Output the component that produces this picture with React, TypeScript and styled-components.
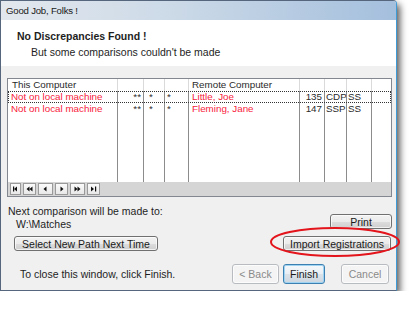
import React from 'react'
import styled, { createGlobalStyle } from 'styled-components'

const GlobalStyle = createGlobalStyle`
  html, body {
    margin: 0;
    padding: 0;
    background: #fff;
  }
  body {
    font-family: 'Liberation Sans', Arial, sans-serif;
    color: #1e1e1e;
  }
  * {
    box-sizing: border-box;
  }
`

const Window = styled.div`
  width: 397px;
  height: 291px;
  border: 1px solid #56667c;
  border-right-color: #3f9bd8;
  border-radius: 0 4px 0 0;
  box-shadow: 3px 4px 7px rgba(0, 0, 0, 0.65);
  background: #f0f0f0;
  display: flex;
  flex-direction: column;
`

const TitleBar = styled.div`
  height: 19px;
  padding-left: 5px;
  display: flex;
  align-items: center;
  font-size: 9.6px;
  letter-spacing: -0.2px;
  color: #1a1a1a;
  background: linear-gradient(to right, #e3e8ee 0%, #cbd9e7 45%, #a4bfdd 100%);
  border-radius: 0 3px 0 0;
`

const Header = styled.div`
  height: 46px;
  background: #fff;
  padding: 10px 0 0 16px;
`

const HeaderTitle = styled.div`
  font-size: 10.5px;
  font-weight: bold;
  line-height: 12px;
`

const HeaderSub = styled.div`
  font-size: 10.5px;
  line-height: 12px;
  margin: 4px 0 0 14px;
`

const Body = styled.div`
  flex: 1;
  padding: 12px 4px 0 6px;
  display: flex;
  flex-direction: column;
`

// ---- grid ----
const cols = '110px 26px 21px 24px 111px 25px 22px 25px 1fr'

const GridBox = styled.div`
  height: 119px;
  border: 1px solid #828790;
  background: #fff;
  display: flex;
  flex-direction: column;
  font-size: 9.8px;
`

const Row = styled.div<{ $h?: number; $focus?: boolean }>`
  display: grid;
  grid-template-columns: ${cols};
  height: ${p => (p.$h ? `${p.$h}px` : 'auto')};
  flex: ${p => (p.$h ? 'none' : 1)};
  outline: ${p => (p.$focus ? '1px dotted #333' : 'none')};
  outline-offset: -1px;
  line-height: 12px;
`

const Cell = styled.div<{ $align?: 'left' | 'right'; $pad?: number; $red?: boolean; $head?: boolean }>`
  border-right: 1px solid ${p => (p.$head ? '#dadada' : '#8c8c8c')};
  text-align: ${p => p.$align || 'left'};
  padding: 0 ${p => (p.$align === 'right' ? 2 : 0)}px 0 ${p => (p.$pad ?? 3)}px;
  color: ${p => (p.$red ? '#f81c3c' : '#2a2a2a')};
  white-space: nowrap;
  overflow: hidden;
  &:last-child {
    border-right: none;
  }
`

const NavBar = styled.div`
  height: 14px;
  background: #d5d5d5;
  display: flex;
  align-items: center;
  gap: 2px;
  padding-left: 2px;
`

const NavBtn = styled.div<{ $w: number }>`
  width: ${p => p.$w}px;
  height: 12px;
  border: 1px solid #9a9a9a;
  background: linear-gradient(#fbfbfb, #e8e8e8);
  display: flex;
  align-items: center;
  justify-content: center;
`

// ---- lower part ----
const Lower = styled.div`
  display: flex;
  justify-content: space-between;
  margin-top: 8px;
`

const LeftCol = styled.div`
  display: flex;
  flex-direction: column;
  align-items: flex-start;
`

const RightCol = styled.div`
  display: flex;
  flex-direction: column;
  align-items: flex-end;
  padding-top: 9px;
  gap: 7px;
`

const Label = styled.div<{ $indent?: number }>`
  font-size: 10.5px;
  line-height: 13px;
  padding-left: ${p => p.$indent ?? 1}px;
`

const ButtonSlot = styled.div`
  margin: 5px 0 0 7px;
`

const Button = styled.div<{ $w: number; $h?: number; $disabled?: boolean; $default?: boolean }>`
  width: ${p => p.$w}px;
  height: ${p => p.$h ?? 15}px;
  font-size: 10.5px;
  display: flex;
  align-items: center;
  justify-content: center;
  border-radius: 3px;
  border: 1px solid ${p => (p.$default ? '#3c7fb1' : p.$disabled ? '#b8bcc0' : '#707070')};
  color: ${p => (p.$disabled ? '#8a8a8a' : '#1a1a1a')};
  background: ${p =>
    p.$disabled
      ? '#f4f4f4'
      : p.$default
      ? 'linear-gradient(#f4f8fb 0%, #e8eef3 50%, #dbe3ea 51%, #ccd6de 100%)'
      : 'linear-gradient(#f2f2f2 0%, #ebebeb 50%, #dddddd 51%, #cfcfcf 100%)'};
  box-shadow: ${p => (p.$default ? 'inset 0 0 0 1px #9fd3f2' : 'inset 0 0 0 1px rgba(255,255,255,0.7)')};
`

const Annotated = styled.div`
  position: relative;
  margin-right: 1px;
`

const Ring = styled.svg`
  position: absolute;
  left: -13px;
  top: -9px;
  overflow: visible;
  pointer-events: none;
`

const Footer = styled.div`
  display: flex;
  align-items: center;
  margin-top: 13px;
  padding: 0 3px 0 13px;
`

const FooterText = styled.div`
  flex: 1;
  font-size: 10.5px;
`

const FooterButtons = styled.div`
  display: flex;
  gap: 4px;
`

const CancelWrap = styled.div`
  margin-left: 16px;
`

type Glyph = 'first' | 'prevPage' | 'prev' | 'next' | 'nextPage' | 'last'

function NavIcon({ kind }: { kind: Glyph }) {
  const l = (x: number) => `M${x} 1.5 L${x - 3} 4 L${x} 6.5Z`
  const r = (x: number) => `M${x} 1.5 L${x + 3} 4 L${x} 6.5Z`
  let d = ''
  let bar: number | null = null
  if (kind === 'first') { d = l(6); bar = 2 }
  if (kind === 'prevPage') { d = l(4.5) + l(7.5) }
  if (kind === 'prev') d = l(5.5)
  if (kind === 'next') d = r(3.5)
  if (kind === 'nextPage') { d = r(1.5) + r(4.5) }
  if (kind === 'last') { d = r(2); bar = 6 }
  return (
    <svg width="9" height="8" viewBox="0 0 9 8">
      {bar !== null && <rect x={bar} y={1.5} width={1.2} height={5} fill="#111" />}
      <path d={d} fill="#111" />
    </svg>
  )
}

const rows = [
  { local: 'Not on local machine', a: '**', b: '*', c: '*', remote: 'Little, Joe', num: '135', kind: 'CDP', st: 'SS' },
  { local: 'Not on local machine', a: '**', b: '*', c: '*', remote: 'Fleming, Jane', num: '147', kind: 'SSP', st: 'SS' }
]

const navs: Array<[Glyph, number]> = [
  ['first', 11],
  ['prevPage', 13],
  ['prev', 15],
  ['next', 13],
  ['nextPage', 15],
  ['last', 13]
]

export default function App() {
  return (
    <>
      <GlobalStyle />
      <Window>
        <TitleBar>Good Job, Folks !</TitleBar>
        <Header>
          <HeaderTitle>No Discrepancies Found !</HeaderTitle>
          <HeaderSub>But some comparisons couldn't be made</HeaderSub>
        </Header>
        <Body>
          <GridBox>
            <Row $h={12}>
              <Cell $head $pad={4}>This Computer</Cell>
              <Cell $head />
              <Cell $head />
              <Cell $head />
              <Cell $head>Remote Computer</Cell>
              <Cell $head />
              <Cell $head />
              <Cell $head />
              <Cell $head />
            </Row>
            {rows.map((r, i) => (
              <Row key={i} $h={12} $focus={i === 0}>
                <Cell $red>{r.local}</Cell>
                <Cell $align="right">{r.a}</Cell>
                <Cell $pad={5}>{r.b}</Cell>
                <Cell $pad={2}>{r.c}</Cell>
                <Cell $red>{r.remote}</Cell>
                <Cell $align="right">{r.num}</Cell>
                <Cell $pad={1}>{r.kind}</Cell>
                <Cell $pad={1}>{r.st}</Cell>
                <Cell />
              </Row>
            ))}
            <Row>
              <Cell />
              <Cell />
              <Cell />
              <Cell />
              <Cell />
              <Cell />
              <Cell />
              <Cell />
              <Cell />
            </Row>
            <NavBar>
              {navs.map(([k, w]) => (
                <NavBtn key={k} $w={w}>
                  <NavIcon kind={k} />
                </NavBtn>
              ))}
            </NavBar>
          </GridBox>

          <Lower>
            <LeftCol>
              <Label>Next comparison will be made to:</Label>
              <Label $indent={9}>W:\Matches</Label>
              <ButtonSlot>
                <Button $w={144}>Select New Path Next Time</Button>
              </ButtonSlot>
            </LeftCol>
            <RightCol>
              <Button $w={62}>Print</Button>
              <Annotated>
                <Button $w={108}>Import Registrations</Button>
                <Ring width="130" height="30" viewBox="0 0 130 30">
                  <ellipse cx="65" cy="15" rx="64" ry="14" fill="none" stroke="#e3141b" strokeWidth="2" />
                </Ring>
              </Annotated>
            </RightCol>
          </Lower>

          <Footer>
            <FooterText>To close this window, click Finish.</FooterText>
            <FooterButtons>
              <Button $w={47} $h={20} $disabled>
                &lt; Back
              </Button>
              <Button $w={42} $h={20} $default>
                Finish
              </Button>
            </FooterButtons>
            <CancelWrap>
              <Button $w={48} $h={20} $disabled>
                Cancel
              </Button>
            </CancelWrap>
          </Footer>
        </Body>
      </Window>
    </>
  )
}
